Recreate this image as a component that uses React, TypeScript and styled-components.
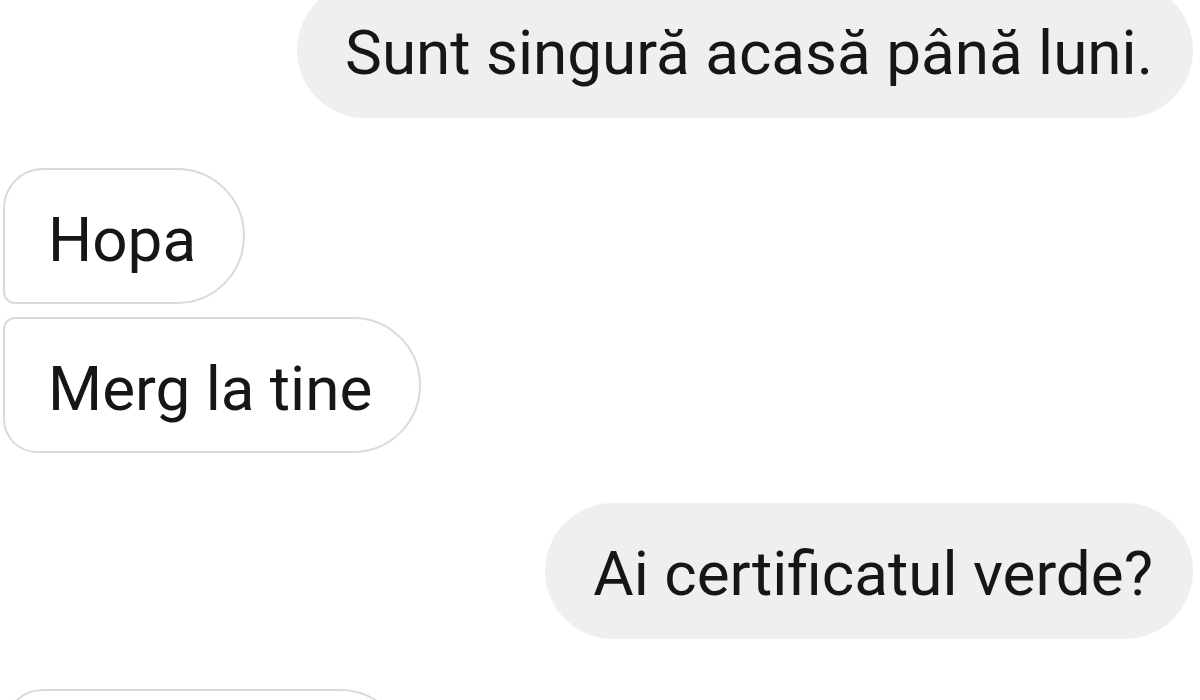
import React from "react";
import styled, { createGlobalStyle, css } from "styled-components";

const GlobalStyle = createGlobalStyle`
  html, body {
    margin: 0;
    padding: 0;
    background: #ffffff;
    overflow: hidden;
  }
  body {
    font-family: Roboto, "Noto Sans", "Liberation Sans", sans-serif;
  }
`;

const Thread = styled.div`
  width: 1200px;
  height: 700px;
  overflow: hidden;
  box-sizing: border-box;
  padding: 0 7px 0 3px;
  display: flex;
  flex-direction: column;
`;

const Scroll = styled.div`
  margin-top: -18px;
  display: flex;
  flex-direction: column;
  gap: 50px;
`;

const Group = styled.div<{ $side: "in" | "out" }>`
  display: flex;
  flex-direction: column;
  gap: 13px;
  align-items: ${(p) => (p.$side === "out" ? "flex-end" : "flex-start")};
`;

type Pos = "single" | "first" | "last";

const Bubble = styled.div<{ $side: "in" | "out"; $pos: Pos; $minWidth?: number }>`
  box-sizing: border-box;
  font-family: Roboto, "Noto Sans", "Liberation Sans", sans-serif;
  font-size: 62px;
  line-height: 74px;
  height: 136px;
  min-width: ${(p) => (p.$minWidth ? `${p.$minWidth}px` : "0")};
  color: #161616;
  white-space: nowrap;
  flex: none;
  ${(p) =>
    p.$side === "out"
      ? css`
          background: #efefef;
          border-radius: 68px;
          padding: 34px 40px 28px 48px;
        `
      : css`
          background: #ffffff;
          border: 2px solid #dadada;
          padding: 33px 47px 27px 43px;
          border-radius: ${p.$pos === "first"
            ? "40px 68px 68px 12px"
            : p.$pos === "last"
            ? "12px 68px 68px 34px"
            : "40px 68px 68px 40px"};
        `}
`;

const messages: { side: "in" | "out"; texts: string[]; width?: number }[] = [
  { side: "out", texts: ["Sunt singură acasă până luni."] },
  { side: "in", texts: ["Hopa", "Merg la tine"] },
  { side: "out", texts: ["Ai certificatul verde?"] },
  { side: "in", texts: [""], width: 405 },
];

export default function App() {
  return (
    <>
      <GlobalStyle />
      <Thread>
        <Scroll>
          {messages.map((g, gi) => (
            <Group key={gi} $side={g.side}>
              {g.texts.map((t, ti) => {
                const pos: Pos =
                  g.texts.length === 1
                    ? "single"
                    : ti === 0
                    ? "first"
                    : "last";
                return (
                  <Bubble key={ti} $side={g.side} $pos={pos} $minWidth={g.width}>
                    {t}
                  </Bubble>
                );
              })}
            </Group>
          ))}
        </Scroll>
      </Thread>
    </>
  );
}
